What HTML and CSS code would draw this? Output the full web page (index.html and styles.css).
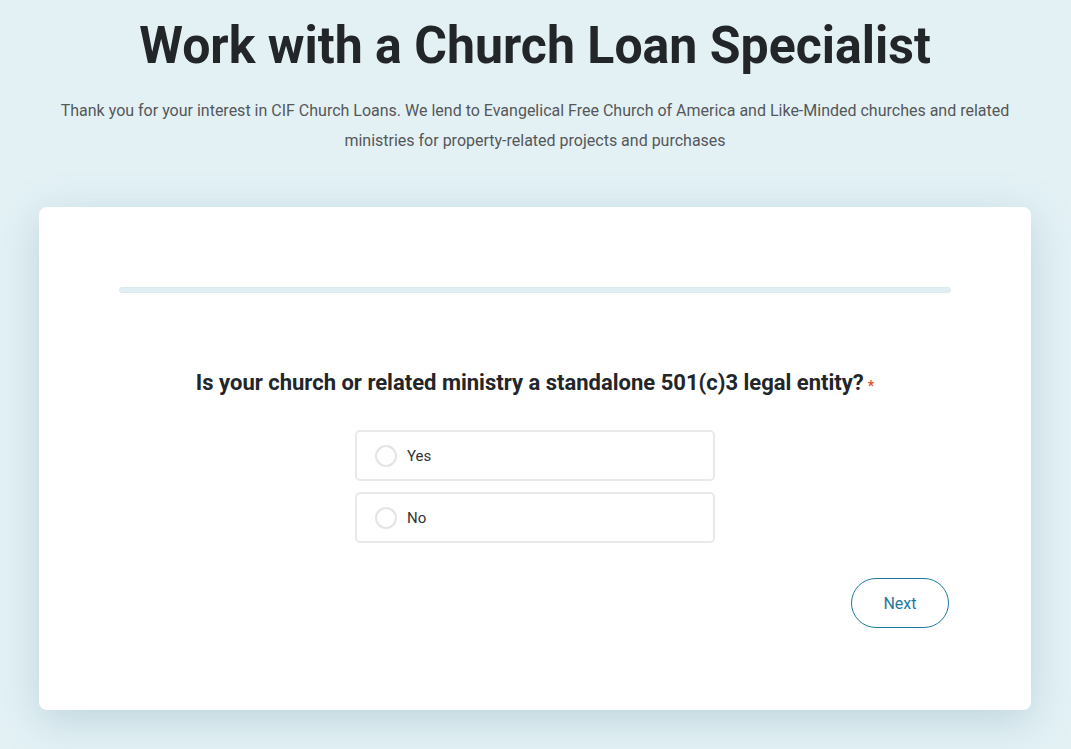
FILE: index.html
```html
<!DOCTYPE html>
<html lang="en">
<head>
<meta charset="utf-8">
<title>Work with a Church Loan Specialist</title>
<link rel="stylesheet" href="styles.css">
</head>
<body>
<main class="page">
  <header class="intro">
    <h1 class="title">Work with a Church Loan Specialist</h1>
    <p class="lead">Thank you for your interest in CIF Church Loans. We lend to Evangelical Free Church of America and Like-Minded churches and related ministries for property-related projects and purchases</p>
  </header>
  <section class="card">
    <div class="progress"><div class="progress-fill"></div></div>
    <h2 class="question">Is your church or related ministry a standalone 501(c)3 legal entity?<span class="req">*</span></h2>
    <div class="options">
      <label class="option"><span class="radio"></span><span class="opt-label">Yes</span></label>
      <label class="option"><span class="radio"></span><span class="opt-label">No</span></label>
    </div>
    <div class="actions">
      <button class="next" type="button">Next</button>
    </div>
  </section>
</main>
</body>
</html>
```
FILE: styles.css
```css
* { box-sizing: border-box; }
html, body { margin: 0; padding: 0; }
body {
  background: #e3f1f5;
  font-family: Roboto, "Liberation Sans", Arial, sans-serif;
  color: #222629;
  height: 749px;
  overflow: hidden;
}
.page {
  display: flex;
  flex-direction: column;
  align-items: center;
  padding-right: 1px;
}
.intro {
  text-align: center;
  padding-top: 13px;
}
.title {
  margin: 0;
  font-size: 50px;
  line-height: 64px;
  font-weight: 700;
  color: #222629;
  transform: scaleY(1.04);
}
.lead {
  margin: 19px auto 0;
  width: 980px;
  font-size: 16px;
  line-height: 30px;
  color: #555759;
}
.card {
  margin-top: 51px;
  width: 992px;
  height: 503px;
  background: #fff;
  border-radius: 8px;
  box-shadow: 0 10px 40px rgba(120, 160, 175, 0.35);
  padding: 80px 80px 0;
  display: flex;
  flex-direction: column;
}
.progress {
  height: 6px;
  border-radius: 3px;
  background: #e1eff4;
  border: 1px solid #d9ebf1;
}
.question {
  margin: 74px 0 0;
  text-align: center;
  font-size: 22px;
  line-height: 32px;
  font-weight: 700;
  color: #222629;
}
.req {
  color: #e2512b;
  font-size: 14px;
  margin-left: 4px;
  vertical-align: -1px;
}
.options {
  margin-top: 28px;
  display: flex;
  flex-direction: column;
  align-items: center;
  gap: 12px;
}
.option {
  width: 360px;
  height: 51px;
  border: 2px solid #e9e9e9;
  border-radius: 5px;
  display: flex;
  align-items: center;
  padding-left: 18px;
  gap: 10px;
}
.option + .option {
  margin-top: -1px;
}
.radio {
  width: 22px;
  height: 22px;
  border: 2px solid #e4e4e4;
  border-radius: 50%;
}
.opt-label {
  font-size: 15px;
  color: #333;
}
.actions {
  margin-top: 35px;
  display: flex;
  justify-content: flex-end;
}
.next {
  width: 98px;
  height: 50px;
  border: 1px solid #1b7a9c;
  border-radius: 25px;
  background: #fff;
  color: #1f7a9b;
  font-family: Roboto, "Liberation Sans", Arial, sans-serif;
  font-size: 16px;
  margin-right: 2px;
}
```
